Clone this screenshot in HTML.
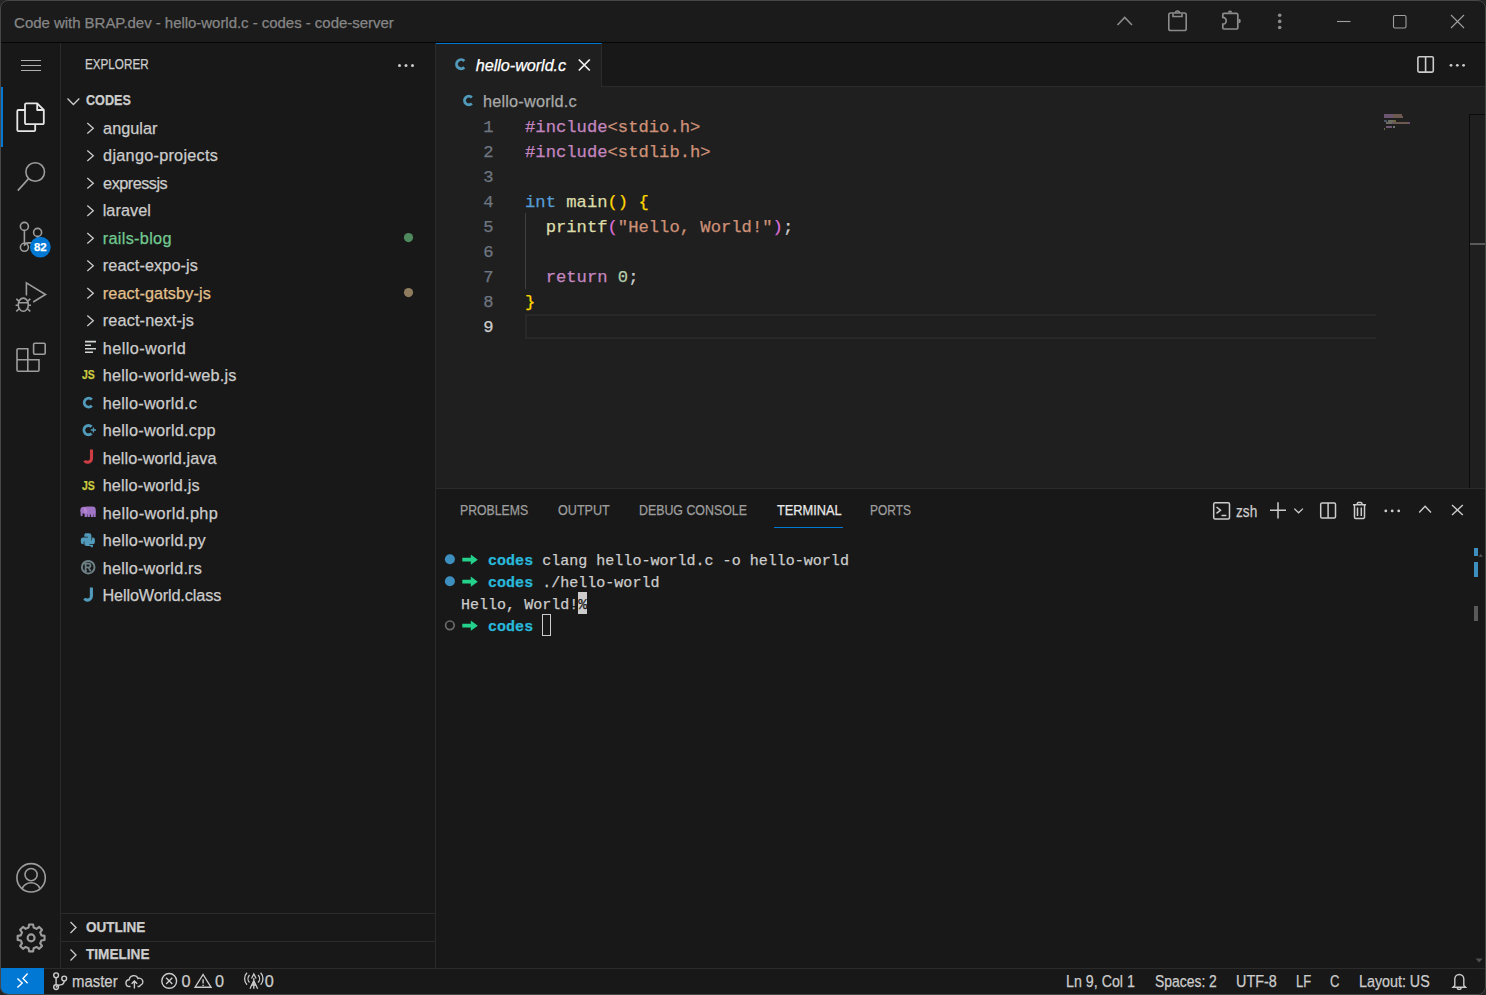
<!DOCTYPE html>
<html><head><meta charset="utf-8">
<style>
*{margin:0;padding:0;box-sizing:border-box}
html,body{width:1486px;height:995px;overflow:hidden;background:#1f1f1f}
body{font-family:"Liberation Sans",sans-serif;color:#cccccc;position:relative}
.a{position:absolute}
.t{position:absolute;white-space:pre;line-height:1;-webkit-text-stroke:0.25px currentColor}
svg{position:absolute;overflow:visible}
</style></head>
<body>
<div class="a" style="left:0px;top:0px;width:1486px;height:42px;background:#1b1b1b;"></div>
<div class="a" style="left:0px;top:42px;width:1486px;height:1px;background:#050505;"></div>
<div class="a" style="left:0px;top:43px;width:60px;height:925px;background:#181818;"></div>
<div class="a" style="left:60px;top:43px;width:1px;height:925px;background:#2b2b2b;"></div>
<div class="a" style="left:61px;top:43px;width:374px;height:925px;background:#181818;"></div>
<div class="a" style="left:435px;top:43px;width:1px;height:925px;background:#2b2b2b;"></div>
<div class="a" style="left:436px;top:43px;width:1050px;height:44px;background:#181818;"></div>
<div class="a" style="left:602px;top:86px;width:884px;height:1px;background:#2b2b2b;"></div>
<div class="a" style="left:436px;top:43px;width:166px;height:44px;background:#1f1f1f;border-top:1px solid #0078d4;border-right:1px solid #2b2b2b"></div>
<div class="a" style="left:436px;top:87px;width:1050px;height:401px;background:#1f1f1f;"></div>
<div class="a" style="left:436px;top:488px;width:1050px;height:1px;background:#2b2b2b;"></div>
<div class="a" style="left:436px;top:489px;width:1050px;height:479px;background:#181818;"></div>
<div class="a" style="left:0px;top:968px;width:1486px;height:1px;background:#2b2b2b;"></div>
<div class="a" style="left:0px;top:969px;width:1486px;height:26px;background:#181818;"></div>
<div class="a" style="left:0px;top:968px;width:44px;height:26px;background:#0078d4;border-bottom-left-radius:8px"></div>
<div class="t" style="left:14.10px;top:15.25px;font-size:15px;color:#868686;font-weight:normal;font-style:normal;font-family:'Liberation Sans',sans-serif;letter-spacing:-0.035px;">Code with BRAP.dev - hello-world.c - codes - code-server</div>
<svg width="1486" height="42" style="left:0;top:0" fill="none" stroke="#8c8c8c" stroke-width="1.6">
    <path d="M1117.5 25 L1124.7 17.5 L1132 25"/>
    <rect x="1168.8" y="13" width="17.4" height="17.5" rx="1.8"/>
    <path d="M1173 13.5 v3 h9 v-3 M1175.5 13 a2 2 0 0 1 4 0"/>
    <path d="M1224 13.4 h12.6 a1.2 1.2 0 0 1 1.2 1.2 v13.2 a1.2 1.2 0 0 1 -1.2 1.2 h-12.6 a1.2 1.2 0 0 1 -1.2 -1.2 v-3.6 a3.4 3.4 0 0 0 0 -6.8 v-2.8 a1.2 1.2 0 0 1 1.2 -1.2z" stroke-width="1.7"/><path d="M1227.8 12.6 a2.2 2.2 0 0 1 4.4 0z M1238.6 18.8 a2.2 2.2 0 0 1 0 4.4z" fill="#8c8c8c" stroke="none"/>
    <g fill="#8c8c8c" stroke="none"><circle cx="1279.7" cy="15.2" r="1.8"/><circle cx="1279.7" cy="21.4" r="1.8"/><circle cx="1279.7" cy="27.5" r="1.8"/></g>
    <g stroke="#a0a0a0" stroke-width="1.1">
    <path d="M1337 21.5 h13.5"/>
    <rect x="1393.5" y="15.5" width="12.5" height="12.5" rx="1.5"/>
    <path d="M1451 15 L1464 28 M1464 15 L1451 28"/>
    </g>
  </svg>
<div class="a" style="left:0px;top:87px;width:3px;height:60px;background:#0078d4;"></div>
<svg width="62" height="995" style="left:0;top:0" fill="none" stroke="#9d9d9d" stroke-width="1.6">
    <g stroke="#b0b0b0" stroke-width="1.2"><path d="M21 60.5 h20 M21 65.5 h20 M21 70.5 h20"/></g>
    <g stroke="#e6e6e6" stroke-width="1.8" stroke-linejoin="round">
      <path d="M25.5 110 h-7 a1.2 1.2 0 0 0 -1.2 1.2 v18.8 a1.2 1.2 0 0 0 1.2 1.2 h15.5 a1.2 1.2 0 0 0 1.2 -1.2 v-5.5"/>
      <path d="M26.2 103.4 h11 l6.6 6.6 v13 a1.2 1.2 0 0 1 -1.2 1.2 h-16.4 a1.2 1.2 0 0 1 -1.2 -1.2 v-18.4 a1.2 1.2 0 0 1 1.2 -1.2z M37.2 103.4 v6.6 h6.6"/>
    </g>
    <circle cx="35.2" cy="172" r="9.3"/>
    <path d="M28.6 178.6 L17.8 190.6"/>
    <circle cx="24.4" cy="226.4" r="4"/>
    <circle cx="37.6" cy="232.4" r="4"/>
    <circle cx="24.4" cy="247.3" r="4"/>
    <path d="M24.4 230.4 v12.9 M37.6 236.4 q0 6 -6 6.5 h-3 q-4 0 -4.2 3"/>
    <path d="M26.4 295.6 v-12.7 L45.5 294.5 L33.2 302"/>
    <ellipse cx="23.3" cy="304.7" rx="5" ry="6.6"/>
    <path d="M18.3 302.7 h10 M16.3 298.8 l2.6 2.4 M30.3 298.8 l-2.6 2.4 M15.6 305.2 h2.6 M28.4 305.2 h2.6 M16.3 311.4 l2.6 -2.4 M30.3 311.4 l-2.6 -2.4"/>
    <path d="M17 360 v-10 a1.2 1.2 0 0 1 1.2 -1.2 h9.6 v22.4 h-9.6 a1.2 1.2 0 0 1 -1.2 -1.2z M17 359.8 h22 v10.2 a1.2 1.2 0 0 1 -1.2 1.2 h-10"/>
    <rect x="33.6" y="343.2" width="11.6" height="11" rx="1.2"/>
    <circle cx="31.1" cy="877.8" r="14.2"/>
    <circle cx="31.1" cy="874.6" r="6.1"/>
    <path d="M22.2 888.8 a9.6 9.6 0 0 1 17.8 0"/>
    <path transform="translate(31.1 937.9)" d="M-2.02 -13.45 L2.02 -13.45 L2.56 -10.29 L5.47 -9.08 L8.08 -10.94 L10.94 -8.08 L9.08 -5.47 L10.29 -2.56 L13.45 -2.02 L13.45 2.02 L10.29 2.56 L9.08 5.47 L10.94 8.08 L8.08 10.94 L5.47 9.08 L2.56 10.29 L2.02 13.45 L-2.02 13.45 L-2.56 10.29 L-5.47 9.08 L-8.08 10.94 L-10.94 8.08 L-9.08 5.47 L-10.29 2.56 L-13.45 2.02 L-13.45 -2.02 L-10.29 -2.56 L-9.08 -5.47 L-10.94 -8.08 L-8.08 -10.94 L-5.47 -9.08 L-2.56 -10.29Z" stroke-width="2.1" stroke-linejoin="round"/>
    <circle cx="31.1" cy="937.9" r="3.5" stroke-width="2.1"/>
    <circle cx="40.3" cy="247.1" r="10.4" fill="#0078d4" stroke="none"/>
  </svg>
<div class="t" style="left:33.63px;top:242.17px;font-size:11.8px;color:#ffffff;font-weight:bold;font-style:normal;font-family:'Liberation Sans',sans-serif;transform:scaleX(0.9697);transform-origin:0 0;">82</div>
<div class="t" style="left:85.44px;top:58.01px;font-size:13.75px;color:#cccccc;font-weight:normal;font-style:normal;font-family:'Liberation Sans',sans-serif;transform:scaleX(0.8493);transform-origin:0 0;">EXPLORER</div>
<svg width="1486" height="995" style="left:0;top:0" fill="#cccccc" stroke="none"><circle cx="399.5" cy="65.5" r="1.5"/><circle cx="406" cy="65.5" r="1.5"/><circle cx="412.5" cy="65.5" r="1.5"/></svg>
<div class="t" style="left:85.70px;top:93.61px;font-size:13.75px;color:#cccccc;font-weight:bold;font-style:normal;font-family:'Liberation Sans',sans-serif;transform:scaleX(0.9160);transform-origin:0 0;">CODES</div>
<div class="t" style="left:103.11px;top:119.79px;font-size:16.25px;color:#cccccc;font-weight:normal;font-style:normal;font-family:'Liberation Sans',sans-serif;letter-spacing:0.007px;">angular</div>
<div class="t" style="left:103.11px;top:147.29px;font-size:16.25px;color:#cccccc;font-weight:normal;font-style:normal;font-family:'Liberation Sans',sans-serif;letter-spacing:0.261px;">django-projects</div>
<div class="t" style="left:103.11px;top:174.79px;font-size:16.25px;color:#cccccc;font-weight:normal;font-style:normal;font-family:'Liberation Sans',sans-serif;letter-spacing:-0.507px;">expressjs</div>
<div class="t" style="left:102.70px;top:202.29px;font-size:16.25px;color:#cccccc;font-weight:normal;font-style:normal;font-family:'Liberation Sans',sans-serif;letter-spacing:0.056px;">laravel</div>
<div class="t" style="left:102.74px;top:229.79px;font-size:16.25px;color:#73c991;font-weight:normal;font-style:normal;font-family:'Liberation Sans',sans-serif;letter-spacing:0.309px;">rails-blog</div>
<div class="t" style="left:102.74px;top:257.29px;font-size:16.25px;color:#cccccc;font-weight:normal;font-style:normal;font-family:'Liberation Sans',sans-serif;letter-spacing:0.108px;">react-expo-js</div>
<div class="t" style="left:102.74px;top:284.79px;font-size:16.25px;color:#e2c08d;font-weight:normal;font-style:normal;font-family:'Liberation Sans',sans-serif;letter-spacing:0.105px;">react-gatsby-js</div>
<div class="t" style="left:102.74px;top:312.29px;font-size:16.25px;color:#cccccc;font-weight:normal;font-style:normal;font-family:'Liberation Sans',sans-serif;letter-spacing:0.151px;">react-next-js</div>
<div class="t" style="left:102.66px;top:339.79px;font-size:16.25px;color:#cccccc;font-weight:normal;font-style:normal;font-family:'Liberation Sans',sans-serif;letter-spacing:0.448px;">hello-world</div>
<div class="t" style="left:102.66px;top:367.29px;font-size:16.25px;color:#cccccc;font-weight:normal;font-style:normal;font-family:'Liberation Sans',sans-serif;letter-spacing:0.222px;">hello-world-web.js</div>
<div class="t" style="left:102.66px;top:394.79px;font-size:16.25px;color:#cccccc;font-weight:normal;font-style:normal;font-family:'Liberation Sans',sans-serif;letter-spacing:0.248px;">hello-world.c</div>
<div class="t" style="left:102.66px;top:422.29px;font-size:16.25px;color:#cccccc;font-weight:normal;font-style:normal;font-family:'Liberation Sans',sans-serif;letter-spacing:0.258px;">hello-world.cpp</div>
<div class="t" style="left:102.66px;top:449.79px;font-size:16.25px;color:#cccccc;font-weight:normal;font-style:normal;font-family:'Liberation Sans',sans-serif;letter-spacing:0.060px;">hello-world.java</div>
<div class="t" style="left:102.66px;top:477.29px;font-size:16.25px;color:#cccccc;font-weight:normal;font-style:normal;font-family:'Liberation Sans',sans-serif;letter-spacing:0.168px;">hello-world.js</div>
<div class="t" style="left:102.66px;top:504.79px;font-size:16.25px;color:#cccccc;font-weight:normal;font-style:normal;font-family:'Liberation Sans',sans-serif;letter-spacing:0.351px;">hello-world.php</div>
<div class="t" style="left:102.66px;top:532.29px;font-size:16.25px;color:#cccccc;font-weight:normal;font-style:normal;font-family:'Liberation Sans',sans-serif;letter-spacing:0.201px;">hello-world.py</div>
<div class="t" style="left:102.66px;top:559.79px;font-size:16.25px;color:#cccccc;font-weight:normal;font-style:normal;font-family:'Liberation Sans',sans-serif;letter-spacing:0.197px;">hello-world.rs</div>
<div class="t" style="left:102.46px;top:587.29px;font-size:16.25px;color:#cccccc;font-weight:normal;font-style:normal;font-family:'Liberation Sans',sans-serif;letter-spacing:-0.126px;">HelloWorld.class</div>
<svg width="1486" height="995" style="left:0;top:0" fill="none" stroke="#cccccc" stroke-width="1.3"><path d="M67.5 98.5 L73.4 104.5 L79.3 98.5"/><path d="M87.3 123.0 L93.3 128.3 L87.3 133.6"/><path d="M87.3 150.5 L93.3 155.8 L87.3 161.1"/><path d="M87.3 178.0 L93.3 183.3 L87.3 188.6"/><path d="M87.3 205.5 L93.3 210.8 L87.3 216.1"/><path d="M87.3 233.0 L93.3 238.3 L87.3 243.6"/><path d="M87.3 260.5 L93.3 265.8 L87.3 271.1"/><path d="M87.3 288.0 L93.3 293.3 L87.3 298.6"/><path d="M87.3 315.5 L93.3 320.8 L87.3 326.1"/><circle cx="408.5" cy="237.6" r="4.6" fill="#4f8a5f" stroke="none"/><circle cx="408.5" cy="292.6" r="4.6" fill="#8f7c5e" stroke="none"/></svg>
<svg width="1486" height="995" style="left:0;top:0" stroke="none">
      <g stroke="#d4d7d6" stroke-width="1.6" fill="none"><path d="M85 341.6 h11 M85 345.2 h6 M85 348.7 h11 M85 352.2 h8"/></g>
    </svg>
<div class="t" style="left:81.74px;top:368.34px;font-size:13.6px;color:#cbcb41;font-weight:bold;font-style:normal;font-family:'Liberation Sans',sans-serif;-webkit-text-stroke:0.25px #cbcb41;transform:scaleX(0.7747);transform-origin:0 0;">JS</div>
<div class="t" style="left:81.74px;top:478.54px;font-size:13.6px;color:#cbcb41;font-weight:bold;font-style:normal;font-family:'Liberation Sans',sans-serif;-webkit-text-stroke:0.25px #cbcb41;transform:scaleX(0.7747);transform-origin:0 0;">JS</div>
<svg width="1486" height="995" style="left:0;top:0"><path d="M91.85 399.45 A4.45 4.45 0 1 0 91.85 405.75" fill="none" stroke="#519aba" stroke-width="2.9"/><path d="M91.55 426.81 A4.45 4.65 0 1 0 91.55 433.39" fill="none" stroke="#519aba" stroke-width="2.9"/><path d="M90.8 430 h5.2 M93.4 427.4 v5.2" stroke="#519aba" stroke-width="1.3"/></svg>
<svg width="1486" height="995" style="left:0;top:0" fill="none" stroke-width="3.1" stroke-linecap="butt"><path stroke="#cc3e44" d="M91.5 449.6 v8.9 a3.8 3.8 0 0 1 -3.8 3.8 h-0.4 a2.9 2.9 0 0 1 -2.6 -1.7"/><path stroke="#519aba" d="M91.4 587.6 v8.7 a3.8 3.8 0 0 1 -3.8 3.8 h-0.4 a2.9 2.9 0 0 1 -2.6 -1.7"/></svg>
<svg width="1486" height="995" style="left:0;top:0" stroke="none">
      <g fill="#a074c4"><rect x="83.5" y="506.5" width="12.2" height="8" rx="3.2"/><circle cx="83.8" cy="510.2" r="3.4"/><rect x="80.6" y="509.5" width="2" height="6.8" rx="1"/>
      <rect x="84.6" y="512" width="2.6" height="5" rx="0.6"/><rect x="87.6" y="512" width="2.2" height="5" rx="0.6"/><rect x="90.8" y="512" width="2.2" height="5" rx="0.6"/><rect x="93.4" y="511" width="2.3" height="6" rx="0.6"/></g>
      <path fill="#c58fdc" d="M83.5 507.5 a3 3 0 0 1 3.5 2.5 v3 h-2.5 z" opacity="0.6"/>
      <g fill="#519aba"><path d="M85.5 533.3 h3.6 a2.3 2.3 0 0 1 2.3 2.3 v4.2 a1.2 1.2 0 0 1 -1.2 1.2 h-4.8 a1.8 1.8 0 0 0 -1.8 1.8 v1.4 h-0.6 a2.2 2.2 0 0 1 -2.2 -2.2 v-2.2 a2.2 2.2 0 0 1 2.2 -2.2 h4.8 v-0.8 h-3.5 v-1.7 a1.8 1.8 0 0 1 1.2 -1.8z"/>
      <path d="M90.2 546.1 h-3.6 a2.3 2.3 0 0 1 -2.3 -2.3 v-1.8 a1.2 1.2 0 0 1 1.2 -1.2 h4.8 a1.8 1.8 0 0 0 1.8 -1.8 v-1.4 h0.6 a2.2 2.2 0 0 1 2.2 2.2 v2.2 a2.2 2.2 0 0 1 -2.2 2.2 h-3.2 v0.8 h3.5 v0.7 a1.8 1.8 0 0 1 -1.2 1.8z"/></g>
      <circle cx="88.2" cy="567.2" r="6.3" fill="none" stroke="#6d8086" stroke-width="2"/>
      <path fill="none" stroke="#6d8086" stroke-width="1.8" d="M85.6 571.2 v-7.6 h3 a1.9 1.9 0 0 1 0 3.8 h-3 M88.4 567.4 l2.3 3.8 M84.3 563.6 h2 M84.3 571.2 h2.6"/>
    </svg>
<div class="a" style="left:61px;top:913px;width:374px;height:1px;background:#2b2b2b;"></div>
<div class="a" style="left:61px;top:941px;width:374px;height:1px;background:#2b2b2b;"></div>
<div class="t" style="left:85.66px;top:921.21px;font-size:13.75px;color:#cccccc;font-weight:bold;font-style:normal;font-family:'Liberation Sans',sans-serif;transform:scaleX(0.9838);transform-origin:0 0;">OUTLINE</div>
<div class="t" style="left:86.06px;top:948.21px;font-size:13.75px;color:#cccccc;font-weight:bold;font-style:normal;font-family:'Liberation Sans',sans-serif;transform:scaleX(0.9891);transform-origin:0 0;">TIMELINE</div>
<svg width="1486" height="995" style="left:0;top:0"><path d="M464.32 60.93 A4.55 4.55 0 1 0 464.32 67.37" fill="none" stroke="#519aba" stroke-width="2.9"/><path d="M471.84 97.41 A4.30 4.30 0 1 0 471.84 103.49" fill="none" stroke="#519aba" stroke-width="2.8"/></svg>
<div class="t" style="left:475.82px;top:56.99px;font-size:16.25px;color:#ffffff;font-weight:normal;font-style:italic;font-family:'Liberation Sans',sans-serif;letter-spacing:-0.071px;">hello-world.c</div>
<svg width="1486" height="995" style="left:0;top:0" fill="none" stroke="#f0f0f0" stroke-width="1.75"><path d="M578.8 59.5 L589.8 70.5 M589.8 59.5 L578.8 70.5"/></svg>
<svg width="1486" height="995" style="left:0;top:0" fill="none" stroke="#cccccc" stroke-width="1.6">
      <rect x="1417.9" y="56.7" width="15.4" height="15.4" rx="1.3"/><path d="M1425.6 56.7 v15.4"/>
      <g fill="#cccccc" stroke="none"><circle cx="1451" cy="65.3" r="1.4"/><circle cx="1457.3" cy="65.3" r="1.4"/><circle cx="1463.6" cy="65.3" r="1.4"/></g>
    </svg>
<div class="t" style="left:482.96px;top:93.19px;font-size:16.25px;color:#a9a9a9;font-weight:normal;font-style:normal;font-family:'Liberation Sans',sans-serif;letter-spacing:0.207px;">hello-world.c</div>
<div class="a" style="left:525px;top:314px;width:851px;height:25px;border:2px solid #282828;border-right:none"></div>
<div class="a" style="left:525px;top:213px;width:1px;height:76px;background:#404040;"></div>
<div class="t" style="left:483.19px;top:118.74px;font-size:17.19px;color:#6e7681;font-weight:normal;font-style:normal;font-family:'Liberation Mono',monospace;letter-spacing:-0.0015px;">1</div>
<div class="t" style="left:525.00px;top:118.74px;font-size:17.19px;color:#cccccc;font-weight:normal;font-style:normal;font-family:'Liberation Mono',monospace;letter-spacing:-0.0015px;"><span style="color:#c586c0">#include</span><span style="color:#ce9178">&lt;stdio.h&gt;</span></div>
<div class="t" style="left:483.19px;top:143.74px;font-size:17.19px;color:#6e7681;font-weight:normal;font-style:normal;font-family:'Liberation Mono',monospace;letter-spacing:-0.0015px;">2</div>
<div class="t" style="left:525.00px;top:143.74px;font-size:17.19px;color:#cccccc;font-weight:normal;font-style:normal;font-family:'Liberation Mono',monospace;letter-spacing:-0.0015px;"><span style="color:#c586c0">#include</span><span style="color:#ce9178">&lt;stdlib.h&gt;</span></div>
<div class="t" style="left:483.19px;top:168.74px;font-size:17.19px;color:#6e7681;font-weight:normal;font-style:normal;font-family:'Liberation Mono',monospace;letter-spacing:-0.0015px;">3</div>
<div class="t" style="left:483.19px;top:193.74px;font-size:17.19px;color:#6e7681;font-weight:normal;font-style:normal;font-family:'Liberation Mono',monospace;letter-spacing:-0.0015px;">4</div>
<div class="t" style="left:525.00px;top:193.74px;font-size:17.19px;color:#cccccc;font-weight:normal;font-style:normal;font-family:'Liberation Mono',monospace;letter-spacing:-0.0015px;"><span style="color:#569cd6">int</span><span style="color:#ccc"> </span><span style="color:#dcdcaa">main</span><span style="color:#ffd700">()</span><span style="color:#ccc"> </span><span style="color:#ffd700">{</span></div>
<div class="t" style="left:483.19px;top:218.74px;font-size:17.19px;color:#6e7681;font-weight:normal;font-style:normal;font-family:'Liberation Mono',monospace;letter-spacing:-0.0015px;">5</div>
<div class="t" style="left:525.00px;top:218.74px;font-size:17.19px;color:#cccccc;font-weight:normal;font-style:normal;font-family:'Liberation Mono',monospace;letter-spacing:-0.0015px;"><span style="color:#ccc">  </span><span style="color:#dcdcaa">printf</span><span style="color:#da70d6">(</span><span style="color:#ce9178">"Hello, World!"</span><span style="color:#da70d6">)</span><span style="color:#cccccc">;</span></div>
<div class="t" style="left:483.19px;top:243.74px;font-size:17.19px;color:#6e7681;font-weight:normal;font-style:normal;font-family:'Liberation Mono',monospace;letter-spacing:-0.0015px;">6</div>
<div class="t" style="left:483.19px;top:268.74px;font-size:17.19px;color:#6e7681;font-weight:normal;font-style:normal;font-family:'Liberation Mono',monospace;letter-spacing:-0.0015px;">7</div>
<div class="t" style="left:525.00px;top:268.74px;font-size:17.19px;color:#cccccc;font-weight:normal;font-style:normal;font-family:'Liberation Mono',monospace;letter-spacing:-0.0015px;"><span style="color:#ccc">  </span><span style="color:#c586c0">return</span><span style="color:#ccc"> </span><span style="color:#b5cea8">0</span><span style="color:#cccccc">;</span></div>
<div class="t" style="left:483.19px;top:293.74px;font-size:17.19px;color:#6e7681;font-weight:normal;font-style:normal;font-family:'Liberation Mono',monospace;letter-spacing:-0.0015px;">8</div>
<div class="t" style="left:525.00px;top:293.74px;font-size:17.19px;color:#cccccc;font-weight:normal;font-style:normal;font-family:'Liberation Mono',monospace;letter-spacing:-0.0015px;"><span style="color:#ffd700">}</span></div>
<div class="t" style="left:483.19px;top:318.74px;font-size:17.19px;color:#cccccc;font-weight:normal;font-style:normal;font-family:'Liberation Mono',monospace;letter-spacing:-0.0015px;">9</div>
<div class="a" style="left:1384px;top:113.8px;width:8.5px;height:1.8px;background:#a07aa8;opacity:0.6"></div>
<div class="a" style="left:1392.5px;top:113.8px;width:9.5px;height:1.8px;background:#a08070;opacity:0.6"></div>
<div class="a" style="left:1384px;top:115.9px;width:8.5px;height:1.8px;background:#a07aa8;opacity:0.6"></div>
<div class="a" style="left:1392.5px;top:115.9px;width:10.5px;height:1.8px;background:#a08070;opacity:0.6"></div>
<div class="a" style="left:1384px;top:119.9px;width:3px;height:1.8px;background:#6a7f99;opacity:0.6"></div>
<div class="a" style="left:1388px;top:119.9px;width:5px;height:1.8px;background:#a0a490;opacity:0.6"></div>
<div class="a" style="left:1393px;top:119.9px;width:2px;height:1.8px;background:#a09a60;opacity:0.6"></div>
<div class="a" style="left:1395px;top:119.9px;width:1.2px;height:1.8px;background:#a09a60;opacity:0.6"></div>
<div class="a" style="left:1386px;top:122.0px;width:6px;height:1.8px;background:#a0a490;opacity:0.6"></div>
<div class="a" style="left:1392px;top:122.0px;width:1px;height:1.8px;background:#a070a8;opacity:0.6"></div>
<div class="a" style="left:1393px;top:122.0px;width:15px;height:1.8px;background:#a08070;opacity:0.6"></div>
<div class="a" style="left:1408px;top:122.0px;width:2px;height:1.8px;background:#a070a8;opacity:0.6"></div>
<div class="a" style="left:1386px;top:126.0px;width:6px;height:1.8px;background:#a07aa8;opacity:0.6"></div>
<div class="a" style="left:1393px;top:126.0px;width:2px;height:1.8px;background:#a0b0a0;opacity:0.6"></div>
<div class="a" style="left:1384px;top:128.1px;width:1.2px;height:1.8px;background:#a09a60;opacity:0.6"></div>
<div class="a" style="left:1469px;top:114px;width:1px;height:374px;background:#0b0b0b;"></div>
<div class="a" style="left:1469px;top:114px;width:16px;height:1px;background:#0b0b0b;"></div>
<div class="a" style="left:1470px;top:243px;width:15px;height:2px;background:#5a5a5a;"></div>
<div class="t" style="left:460.49px;top:504.21px;font-size:13.75px;color:#9d9d9d;font-weight:normal;font-style:normal;font-family:'Liberation Sans',sans-serif;transform:scaleX(0.8907);transform-origin:0 0;">PROBLEMS</div>
<div class="t" style="left:558.00px;top:504.21px;font-size:13.75px;color:#9d9d9d;font-weight:normal;font-style:normal;font-family:'Liberation Sans',sans-serif;transform:scaleX(0.9163);transform-origin:0 0;">OUTPUT</div>
<div class="t" style="left:639.08px;top:504.21px;font-size:13.75px;color:#9d9d9d;font-weight:normal;font-style:normal;font-family:'Liberation Sans',sans-serif;transform:scaleX(0.8998);transform-origin:0 0;">DEBUG CONSOLE</div>
<div class="t" style="left:776.51px;top:504.21px;font-size:13.75px;color:#e7e7e7;font-weight:normal;font-style:normal;font-family:'Liberation Sans',sans-serif;transform:scaleX(0.9309);transform-origin:0 0;">TERMINAL</div>
<div class="t" style="left:870.01px;top:504.21px;font-size:13.75px;color:#9d9d9d;font-weight:normal;font-style:normal;font-family:'Liberation Sans',sans-serif;transform:scaleX(0.8683);transform-origin:0 0;">PORTS</div>
<div class="a" style="left:774px;top:527px;width:69px;height:1px;background:#0078d4;"></div>
<svg width="1486" height="995" style="left:0;top:0" fill="none" stroke="#cccccc" stroke-width="1.5">
      <rect x="1213.7" y="502.8" width="15.8" height="16.2" rx="1.5"/>
      <path d="M1216.5 507 L1220.5 510.2 L1216.5 513.4 M1221.5 515.5 h4.8"/>
      <path d="M1270 510.3 h16 M1278 502.3 v16.3"/>
      <path d="M1294.3 508.6 L1298.6 512.8 L1302.9 508.6" stroke-width="1.3"/>
      <rect x="1320.7" y="503.1" width="14.8" height="15" rx="1.3"/><path d="M1328.1 503.1 v15"/>
      <path d="M1353 504.8 h13 M1357.3 504.8 v-1.3 a1 1 0 0 1 1 -1 h2.6 a1 1 0 0 1 1 1 v1.3 M1354.5 505 v12.2 a1.2 1.2 0 0 0 1.2 1.2 h7.6 a1.2 1.2 0 0 0 1.2 -1.2 v-12.2 M1357.5 507.5 v8.5 M1361.3 507.5 v8.5"/>
      <g fill="#cccccc" stroke="none"><circle cx="1385.8" cy="510.9" r="1.4"/><circle cx="1392.2" cy="510.9" r="1.4"/><circle cx="1398.7" cy="510.9" r="1.4"/></g>
      <path d="M1419.2 512.4 L1425.1 506.3 L1431 512.4" stroke-width="1.4"/>
      <path d="M1452 505 L1462.8 515 M1462.8 505 L1452 515" stroke-width="1.4"/>
    </svg>
<div class="t" style="left:1235.55px;top:502.69px;font-size:16.25px;color:#cccccc;font-weight:normal;font-style:normal;font-family:'Liberation Sans',sans-serif;transform:scaleX(0.8389);transform-origin:0 0;">zsh</div>
<svg width="1486" height="995" style="left:0;top:0" stroke="none">
      <circle cx="449.9" cy="559.2" r="5" fill="#3d8fc0"/>
      <circle cx="449.9" cy="581.2" r="5" fill="#3d8fc0"/>
      <circle cx="449.9" cy="625.3" r="4.3" fill="none" stroke="#6b6b6b" stroke-width="1.7"/>
      <g fill="#23d18b">
        <path d="M462.3 557.8 h8.5 v-3.2 l7 5.1 l-7 5.1 v-3.2 h-8.5z"/>
        <path d="M462.3 579.8 h8.5 v-3.2 l7 5.1 l-7 5.1 v-3.2 h-8.5z"/>
        <path d="M462.3 623.8 h8.5 v-3.2 l7 5.1 l-7 5.1 v-3.2 h-8.5z"/>
      </g>
    </svg>
<div class="a" style="left:578.3px;top:592.4px;width:8.8px;height:21.5px;background:#cccccc;"></div>
<div class="t" style="left:488.06px;top:554.10px;font-size:15.0px;color:#cccccc;font-weight:normal;font-style:normal;font-family:'Liberation Mono',monospace;letter-spacing:0.0200px;"><span style="color:#29b8db;font-weight:bold">codes</span> clang hello-world.c -o hello-world</div>
<div class="t" style="left:488.06px;top:576.10px;font-size:15.0px;color:#cccccc;font-weight:normal;font-style:normal;font-family:'Liberation Mono',monospace;letter-spacing:0.0200px;"><span style="color:#29b8db;font-weight:bold">codes</span> ./hello-world</div>
<div class="t" style="left:461.00px;top:598.20px;font-size:15.0px;color:#cccccc;font-weight:normal;font-style:normal;font-family:'Liberation Mono',monospace;letter-spacing:0.0200px;">Hello, World!<span style="color:#181818">%</span></div>
<div class="t" style="left:488.06px;top:620.20px;font-size:15.0px;color:#cccccc;font-weight:normal;font-style:normal;font-family:'Liberation Mono',monospace;letter-spacing:0.0200px;"><span style="color:#29b8db;font-weight:bold">codes</span> </div>
<div class="a" style="left:541.6px;top:614px;width:9px;height:21.5px;border:1px solid #cccccc"></div>
<div class="a" style="left:1474px;top:548px;width:4px;height:8px;background:#3d8fc0;"></div>
<div class="a" style="left:1474px;top:562px;width:4px;height:15px;background:#3d8fc0;"></div>
<div class="a" style="left:1474px;top:606px;width:4px;height:15px;background:#5a5a5a;"></div>
<svg width="1486" height="995" style="left:0;top:0"><path d="M1475.6 958.6 h7 l-3.5 3.8z" fill="#505050"/><path d="M1478.5 556.8 l2.2 -2.8 l2.2 2.8z" fill="#555"/></svg>
<svg width="1486" height="995" style="left:0;top:0" fill="none" stroke="#ffffff" stroke-width="1.6">
      <path d="M17.4 978.6 L22.2 983 L17.4 987.4 M27.6 973.6 L23 978.4 L27.6 983.2" stroke-width="1.4"/>
    </svg>
<svg width="1486" height="995" style="left:0;top:0" fill="none" stroke="#cccccc" stroke-width="1.4">
      <circle cx="56.1" cy="975.3" r="2.4"/><circle cx="56.1" cy="987.1" r="2.4"/><circle cx="64.2" cy="978.5" r="2.4"/>
      <path d="M56.1 977.7 v7 M64.2 980.9 q0 3.5 -4 4 q-3.6 0.4 -4.1 2.6"/>
      <path d="M130.5 986.5 h-1 a3.4 3.4 0 0 1 -0.3 -6.8 a4.6 4.6 0 0 1 8.8 -1.2 a3.4 3.4 0 0 1 2.6 6.6 a3 3 0 0 1 -1.6 1.4 h-1.5 M134.4 988.5 v-7.5 M131.6 983.7 l2.8 -2.8 l2.8 2.8"/>
      <circle cx="169.2" cy="980.9" r="7.4"/><path d="M166.1 977.8 l6.2 6.2 M172.3 977.8 l-6.2 6.2"/>
      <path d="M203.1 974.5 L211 987.2 h-15.9z M203.1 979.2 v4.2 M203.1 984.8 v1.2"/>
      <path d="M251.5 978.5 L253.8 973.9 L256.1 978.5 M253.8 978 v10.7 M250 988.7 L253.8 980.5 L257.6 988.7 M251.2 985 h5.2" stroke-width="1.3"/>
      <path d="M249.5 975 a5.5 5.5 0 0 0 0 7.5 M258.1 975 a5.5 5.5 0 0 1 0 7.5 M247 972.8 a8.6 8.6 0 0 0 0 11.9 M260.6 972.8 a8.6 8.6 0 0 1 0 11.9" stroke-width="1.3"/>
      <path d="M1454.8 985.5 v-6.5 a4.5 4.5 0 0 1 9 0 v6.5 l1.8 1.8 h-12.6z M1457.3 987.5 a1.9 1.9 0 0 0 3.8 0"/>
    </svg>
<div class="t" style="left:72.09px;top:972.79px;font-size:16.25px;color:#cccccc;font-weight:normal;font-style:normal;font-family:'Liberation Sans',sans-serif;transform:scaleX(0.9192);transform-origin:0 0;">master</div>
<div class="t" style="left:181.45px;top:972.79px;font-size:16.25px;color:#cccccc;font-weight:normal;font-style:normal;font-family:'Liberation Sans',sans-serif;letter-spacing:0.000px;">0</div>
<div class="t" style="left:214.95px;top:972.79px;font-size:16.25px;color:#cccccc;font-weight:normal;font-style:normal;font-family:'Liberation Sans',sans-serif;letter-spacing:0.000px;">0</div>
<div class="t" style="left:264.65px;top:972.79px;font-size:16.25px;color:#cccccc;font-weight:normal;font-style:normal;font-family:'Liberation Sans',sans-serif;letter-spacing:0.000px;">0</div>
<div class="t" style="left:1065.83px;top:972.99px;font-size:16.25px;color:#cccccc;font-weight:normal;font-style:normal;font-family:'Liberation Sans',sans-serif;transform:scaleX(0.8763);transform-origin:0 0;">Ln 9, Col 1</div>
<div class="t" style="left:1154.97px;top:972.99px;font-size:16.25px;color:#cccccc;font-weight:normal;font-style:normal;font-family:'Liberation Sans',sans-serif;transform:scaleX(0.8559);transform-origin:0 0;">Spaces: 2</div>
<div class="t" style="left:1235.59px;top:972.99px;font-size:16.25px;color:#cccccc;font-weight:normal;font-style:normal;font-family:'Liberation Sans',sans-serif;transform:scaleX(0.8848);transform-origin:0 0;">UTF-8</div>
<div class="t" style="left:1295.73px;top:972.99px;font-size:16.25px;color:#cccccc;font-weight:normal;font-style:normal;font-family:'Liberation Sans',sans-serif;transform:scaleX(0.7969);transform-origin:0 0;">LF</div>
<div class="t" style="left:1330.25px;top:972.99px;font-size:16.25px;color:#cccccc;font-weight:normal;font-style:normal;font-family:'Liberation Sans',sans-serif;transform:scaleX(0.8044);transform-origin:0 0;">C</div>
<div class="t" style="left:1359.32px;top:972.99px;font-size:16.25px;color:#cccccc;font-weight:normal;font-style:normal;font-family:'Liberation Sans',sans-serif;transform:scaleX(0.8797);transform-origin:0 0;">Layout: US</div>
<svg width="1486" height="995" style="left:0;top:0" fill="none" stroke="#cccccc" stroke-width="1.3"><path d="M70.5 922 L76 927.5 L70.5 933 M70.5 949.5 L76 955 L70.5 960.5"/></svg>
<div class="a" style="left:0;top:0;width:1486px;height:995px;border:1px solid #474747;border-radius:8px;box-shadow:0 0 0 20px #262626"></div>
</body></html>
